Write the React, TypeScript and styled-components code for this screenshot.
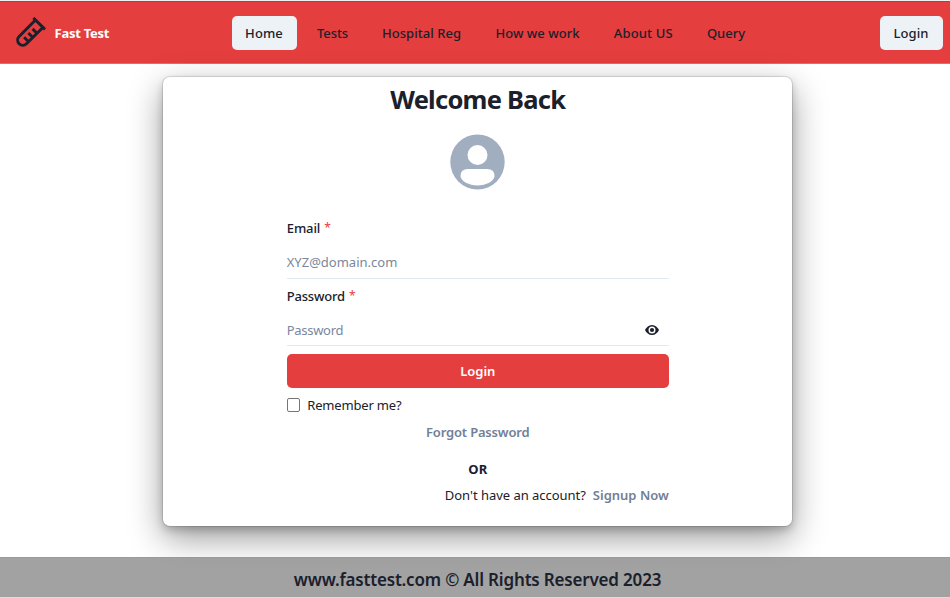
import React from "react";
import styled, { createGlobalStyle } from "styled-components";

const Global = createGlobalStyle`
  *, *::before, *::after { box-sizing: border-box; }
  body { margin: 0; background: #fff; color: #1a202c; font-family: "Noto Sans", "Open Sans", sans-serif; font-size: 13.5px; overflow: hidden; }
  button, input { font: inherit; color: inherit; letter-spacing: inherit; }
`;
const Page = styled.div`
  height: 598px; display: flex; flex-direction: column; align-items: center; border-top: 1px solid #f1f1f1;
`;
const Header = styled.header`
  width: 100%; height: 63px; flex: none; display: grid; grid-template-columns: 231.5px 1fr auto;
  align-items: center; padding: 0 7.5px 0 0; background: #e53e3e;
  border-top: 1px solid #8a5050; border-bottom: 1px solid #e96a6a;
`;
const Brand = styled.div`
  display: flex; align-items: center; gap: 8.5px; padding-left: 15px; color: #fff;
  svg { color: #1a202c; }
`;
const Nav = styled.nav`display: flex; gap: 7px;`;
const NavButton = styled.button<{ $width: number; $active?: boolean }>`
  width: ${p => p.$width}px; height: 34px; padding: 1px 0 0; border: 0; border-radius: 5px; white-space: nowrap;
  background: ${p => (p.$active ? "#edf2f7" : "transparent")};
  display: flex; justify-content: center; align-items: center;
`;
const Copy = styled.span<{ $size?: number; $weight?: number; $spacing?: number; $color?: string }>`
  font-size: ${p => p.$size ?? 13}px; font-weight: ${p => p.$weight ?? 400};
  letter-spacing: ${p => p.$spacing ?? 0}px; color: ${p => p.$color ?? "inherit"}; white-space: nowrap;
`;
const Card = styled.main`
  width: 629px; height: 448.5px; margin: 13px 0 0 5.5px; flex: none; border-radius: 7px; background: #fff;
  box-shadow: 0 0 0 1px rgba(0,0,0,.1), 0 4px 9px rgba(0,0,0,.2), 0 12px 34px rgba(0,0,0,.4);
  display: flex; flex-direction: column; align-items: center;
`;
const Title = styled.h1`margin: 4px 0 0; height: 37px; line-height: 37px; font-size: 25.5px; letter-spacing: -.75px; white-space: nowrap;`;
const Avatar = styled.svg`width: 55px; height: 56px; margin-top: 16px; flex: none;`;
const Form = styled.form`width: 382px; margin-top: 27px; display: flex; flex-direction: column;`;
const Group = styled.div`& + & { margin-top: 6px; }`;
const Label = styled.label`height: 22px; line-height: 22px; display: flex; gap: 4px;`;
const Field = styled.div<{ $height: number }>`
  height: ${p => p.$height}px; padding: 7px 10px 0 0; display: flex; align-items: center; border-bottom: 1px solid #e2e8f0;
`;
const Input = styled.input<{ $spacing?: number }>`
  flex: 1; border: 0; outline: 0; padding: 0; background: transparent; font-size: 13px; letter-spacing: ${p => p.$spacing ?? 0}px;
  &::placeholder { color: #7b879b; opacity: 1; }
`;
const Submit = styled.button`
  height: 34px; margin-top: 8px; border: 0; border-radius: 5px; background: #e53e3e; color: white; padding: 0;
`;
const Remember = styled.label`height: 20px; margin-top: 7px; display: flex; align-items: center; gap: 7px;`;
const Check = styled.input`appearance: none; width: 13.5px; height: 14px; margin: 0; border: 1px solid #767676; border-radius: 2px; background: white;`;
const Center = styled.div<{ $top: number }>`height: 20px; margin-top: ${p => p.$top}px; display: flex; align-items: center; justify-content: center;`;
const Signup = styled.div`height: 20px; margin-top: 6px; display: flex; align-items: center; justify-content: flex-end; gap: 7px;`;
const Footer = styled.footer`
  width: 100%; height: 41px; flex: none; margin-top: 31px; padding: 4px 0 0 5px; background: rgba(128,128,128,.73);
  border-top: 1px solid rgba(128,128,128,.2); border-bottom: 1px solid #ddd; text-align: center; z-index: 1; line-height: 36px;
`;

const links: [string, number, number][] = [
  ["Home", 65, .12], ["Tests", 58, -.05], ["Hospital Reg", 106, .03], ["How we work", 112, .03], ["About US", 85.5, .15], ["Query", 66, 0],
];

const TestTube = () => (
  <svg width="31" height="31" viewBox="0 0 30 30" fill="none" stroke="currentColor" strokeWidth="2.8">
    <path d="M17.8 .9 29 12M19.8 3 4 18.8a5 5 0 0 0 7.1 7.1L27 10.1M8.8 19.5l3.700 3.700M12.900 15.500l3.700 3.700M17 11.500l3.700 3.700" />
  </svg>
);
const Eye = () => (
  <svg width="14" height="14" viewBox="0 0 24 24" fill="#1a202c">
    <path fillRule="evenodd" d="M23.4 10.9C21.5 8 17.7 3.5 12 3.5S2.5 8 .6 10.9a2 2 0 0 0 0 2.2C2.5 16 6.3 20.5 12 20.5s9.5-4.5 11.4-7.4a2 2 0 0 0 0-2.2ZM12 18a6 6 0 1 1 0-12 6 6 0 0 1 0 12Z" />
    <circle cx="12" cy="12" r="3.6" />
  </svg>
);

export default function App() {
  return (
    <>
      <Global />
      <Page>
        <Header>
          <Brand><TestTube /><Copy $weight={700} $spacing={-.25}>Fast Test</Copy></Brand>
          <Nav>
            {links.map(([name, width, spacing], i) => (
              <NavButton key={name} $width={width} $active={i === 0}><Copy $weight={500} $spacing={spacing}>{name}</Copy></NavButton>
            ))}
          </Nav>
          <NavButton $width={63} $active><Copy $weight={500} $spacing={.1}>Login</Copy></NavButton>
        </Header>
        <Card>
          <Title>Welcome Back</Title>
          <Avatar viewBox="0 0 55 56">
            <ellipse cx="27.5" cy="28" rx="27.2" ry="27.5" fill="#a0aec0" />
            <circle cx="27.5" cy="21" r="10" fill="#fff" />
            <path d="M18 35H37Q44.5 35 44.5 42C44.5 47 36 51.5 27.5 51.5S10.5 47 10.5 42Q10.5 35 18 35Z" fill="#fff" />
          </Avatar>
          <Form onSubmit={e => e.preventDefault()}>
            <Group>
              <Label><Copy $weight={500} $spacing={-.1}>Email</Copy><Copy $size={12} $color="#e53e3e">*</Copy></Label>
              <Field $height={40}><Input type="email" placeholder="XYZ@domain.com" /></Field>
            </Group>
            <Group>
              <Label><Copy $weight={500} $spacing={-.2}>Password</Copy><Copy $size={12} $color="#e53e3e">*</Copy></Label>
              <Field $height={39}><Input type="password" placeholder="Password" $spacing={-.3} /><Eye /></Field>
            </Group>
            <Submit><Copy $weight={600}>Login</Copy></Submit>
            <Remember><Check type="checkbox" /><Copy $spacing={-.17}>Remember me?</Copy></Remember>
            <Center $top={7}><Copy $weight={600} $spacing={-.18} $color="#718096">Forgot Password</Copy></Center>
            <Center $top={17}><Copy $weight={700}>OR</Copy></Center>
            <Signup><Copy $spacing={-.03}>Don't have an account?</Copy><Copy $weight={600} $color="#718096">Signup Now</Copy></Signup>
          </Form>
        </Card>
        <Footer><Copy $size={17} $weight={600} $spacing={-.18}>www.fasttest.com © All Rights Reserved 2023</Copy></Footer>
      </Page>
    </>
  );
}
